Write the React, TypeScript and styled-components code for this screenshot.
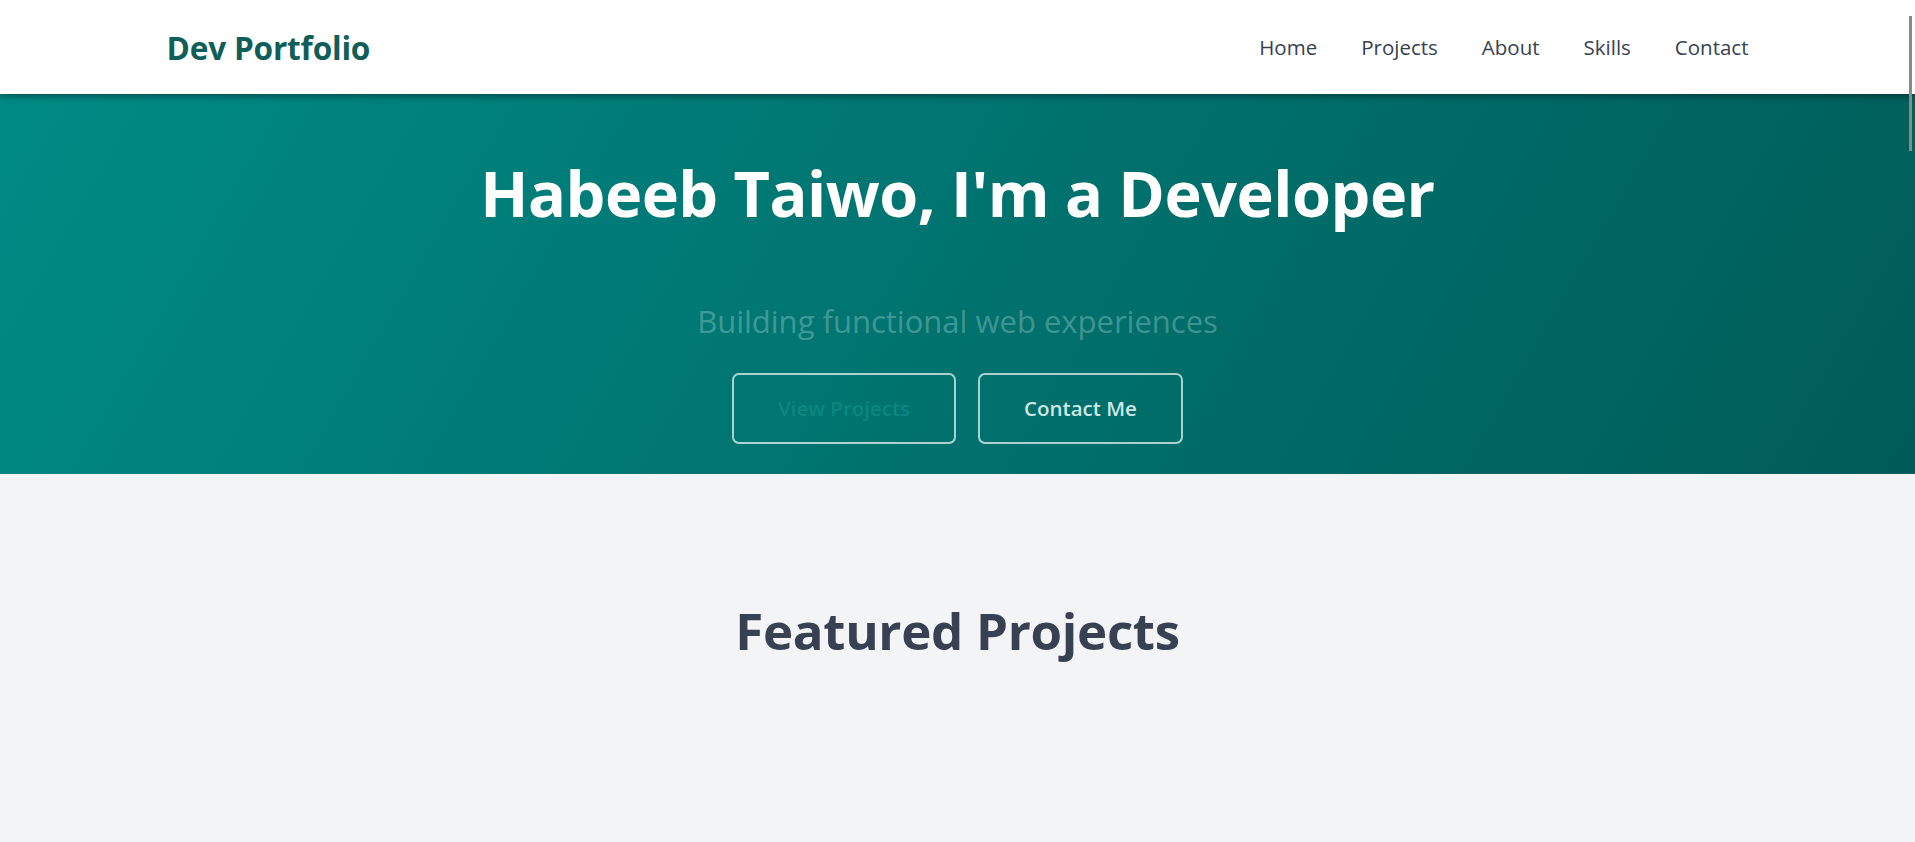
import styled, { createGlobalStyle } from "styled-components";

// Estilos globais
const GlobalStyle = createGlobalStyle`
  * {
    box-sizing: border-box;
  }

  html::-webkit-scrollbar {
    width: 0;
  }

  body {
    margin: 0;
    font-family: "Open Sans", "Noto Sans", "Liberation Sans", sans-serif;
    background: #f3f4f6;
  }
`;

const Header = styled.header`
  position: sticky;
  top: 0;
  z-index: 10;
  background: #ffffff;
  height: 94px;
  box-shadow: 0 2px 7px rgba(0, 0, 0, 0.45);
`;

const HeaderInner = styled.div`
  max-width: 1582px;
  height: 100%;
  margin: 0 auto;
  display: flex;
  align-items: center;
  justify-content: space-between;
`;

const Logo = styled.a`
  font-size: 31.6px;
  font-weight: 700;
  color: #115e59;
  text-decoration: none;
  letter-spacing: -0.2px;
`;

const Nav = styled.nav`
  display: flex;
  gap: 44px;
`;

const NavLink = styled.a`
  font-size: 20.5px;
  color: #374151;
  text-decoration: none;
`;

const Hero = styled.section`
  height: 380px;
  background: linear-gradient(120deg, #008b86 0%, #007571 45%, #005c58 100%);
  display: flex;
  flex-direction: column;
  align-items: center;
  padding-top: 61px;
`;

const HeroTitle = styled.h1`
  margin: 0;
  font-size: 63px;
  font-weight: 700;
  color: #ffffff;
  line-height: 1.2;
  letter-spacing: -0.5px;
`;

const HeroSubtitle = styled.p`
  margin: 70px 0 0;
  font-size: 31px;
  color: rgba(255, 255, 255, 0.27);
  line-height: 1.3;
`;

const ButtonRow = styled.div`
  display: flex;
  gap: 22px;
  margin-top: 32px;
`;

const Button = styled.a<{ $muted?: boolean }>`
  display: flex;
  align-items: center;
  justify-content: center;
  width: ${(p) => (p.$muted ? "224px" : "205px")};
  height: 71px;
  border: 2px solid rgba(255, 255, 255, 0.68);
  border-radius: 7px;
  font-size: 20.5px;
  font-weight: 600;
  color: ${(p) => (p.$muted ? "#0b8780" : "#cfe7e4")};
  text-decoration: none;
`;

const Projects = styled.section`
  min-height: 900px;
  padding-top: 126px;
  display: flex;
  flex-direction: column;
  align-items: center;
`;

const SectionTitle = styled.h2`
  margin: 0;
  font-size: 51px;
  font-weight: 700;
  color: #374151;
  line-height: 1.2;
  letter-spacing: -0.3px;
`;

const ScrollThumb = styled.div`
  position: fixed;
  top: 16px;
  right: 3px;
  width: 3px;
  height: 135px;
  background: #8a8a8a;
  z-index: 20;
`;

export default function App() {
  return (
    <>
      <GlobalStyle />
      <ScrollThumb />
      <Header>
        <HeaderInner>
          <Logo href="#">Dev Portfolio</Logo>
          <Nav>
            <NavLink href="#">Home</NavLink>
            <NavLink href="#">Projects</NavLink>
            <NavLink href="#">About</NavLink>
            <NavLink href="#">Skills</NavLink>
            <NavLink href="#">Contact</NavLink>
          </Nav>
        </HeaderInner>
      </Header>
      <Hero>
        <HeroTitle>Habeeb Taiwo, I'm a Developer</HeroTitle>
        <HeroSubtitle>Building functional web experiences</HeroSubtitle>
        <ButtonRow>
          <Button href="#" $muted>
            View Projects
          </Button>
          <Button href="#">Contact Me</Button>
        </ButtonRow>
      </Hero>
      <Projects>
        <SectionTitle>Featured Projects</SectionTitle>
      </Projects>
    </>
  );
}
